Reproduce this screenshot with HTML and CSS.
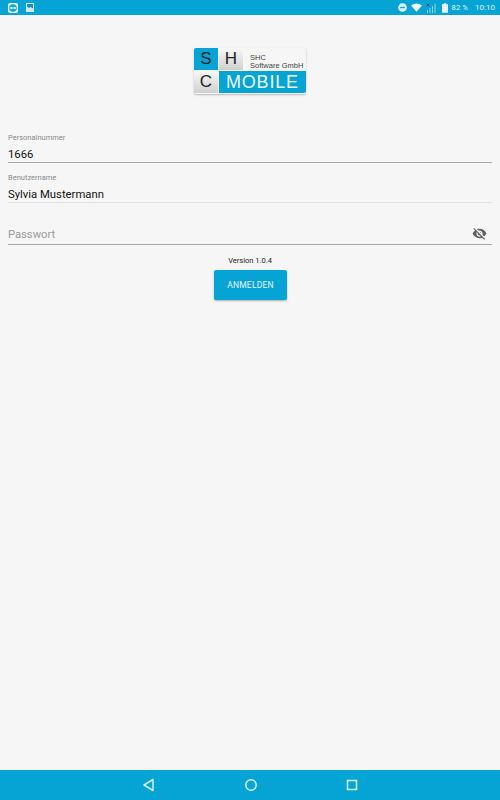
FILE: index.html
```html
<!DOCTYPE html>
<html lang="en">
<head>
  <meta charset="UTF-8" />
  <meta name="viewport" content="width=device-width, initial-scale=1.0" />
  <title>SHC Mobile</title>
  <link rel="stylesheet" href="styles.css">
</head>
<body>
  <header class="status-bar">
    <div class="status-left">
      <span class="tv-icon">
        <svg width="10" height="10" viewBox="0 0 11 11"><circle cx="5.500" cy="5.500" r="4.200" fill="#06a3d5"/><path d="M1.800 5.500 4 3.900v1h3v-1l2.200 1.600L7 7.100v-1H4v1z" fill="#fff"/></svg>
      </span>
      <svg width="8" height="9" viewBox="0 0 8 9"><path d="M0 0h8v9H0z" fill="#cfeaf5"/><path d="M1 1h6v4.500L4.500 4 3 5 1 3.500z" fill="#1690bd"/></svg>
    </div>
    <div class="status-right">
      <svg class="dnd" width="9" height="9" viewBox="0 0 10 10"><circle cx="5" cy="5" r="4.800" fill="#e4f4fa"/><path d="M2.500 4.200h5v1.600h-5z" fill="#06a3d5"/></svg>
      <svg class="wifi" width="11" height="9" viewBox="0 0 13 10"><path d="M0 2.500Q6.500-2 13 2.500L6.500 10z" fill="#f0f9fc"/></svg>
      <svg class="signal" width="11" height="10" viewBox="0 0 11 10"><path d="M1 7h1v3H1zM3.500 5h1v5h-1zM6 3h1v7H6zM8.500 0.500h1V10h-1z" fill="#8fd3ea"/><path d="M0.500 0.500l3 3m0-3l-3 3" stroke="#34536a" stroke-width="1"/></svg>
      <svg class="battery" width="6" height="10" viewBox="0 0 7 11"><path d="M2 0h3v1h2v10H0V1h2z" fill="#e8f6fb"/></svg>
      <span class="battery-text">82 %</span>
      <span class="clock">10:10</span>
    </div>
  </header>

  <main class="login">
    <div class="logo">
      <div class="logo-row">
        <span class="tile tile-blue">S</span>
        <span class="tile tile-grey">H</span>
        <span class="logo-company">SHC<br>Software GmbH</span>
      </div>
      <div class="logo-row">
        <span class="tile tile-grey">C</span>
        <span class="logo-mobile">MOBILE</span>
      </div>
    </div>

    <div class="field field-first">
      <label class="field-label">Personalnummer</label>
      <div class="field-value">1666</div>
    </div>
    <div class="field field-name">
      <label class="field-label">Benutzername</label>
      <div class="field-value">Sylvia Mustermann</div>
    </div>
    <div class="field field-pass">
      <div class="field-placeholder">Passwort</div>
      <svg class="eye" width="15" height="15" viewBox="0 0 24 24"><path d="M12 7c2.760 0 5 2.240 5 5 0 .65-.13 1.260-.36 1.830l2.920 2.920c1.510-1.260 2.700-2.890 3.430-4.750-1.730-4.390-6-7.500-11-7.500-1.400 0-2.740.25-3.980.7l2.160 2.160C10.740 7.130 11.350 7 12 7zM2 4.270l2.280 2.280.46.46C3.080 8.300 1.780 10.020 1 12c1.730 4.390 6 7.500 11 7.500 1.550 0 3.030-.3 4.380-.84l.42.42L19.730 22 21 20.730 3.270 3 2 4.270zM7.530 9.800l1.550 1.550c-.05.21-.08.43-.08.650 0 1.660 1.340 3 3 3 .22 0 .44-.03.65-.08l1.550 1.550c-.67.33-1.410.53-2.200.53-2.760 0-5-2.240-5-5 0-.79.2-1.530.53-2.200zm4.310-.78l3.150 3.150.02-.16c0-1.660-1.340-3-3-3l-.17.010z" fill="#5f5f5f"/></svg>
    </div>

    <p class="version">Version 1.0.4</p>
    <button class="login-button">ANMELDEN</button>
  </main>

  <footer class="nav-bar">
    <svg width="14" height="14" viewBox="0 0 14 14"><path d="M11 1.500v11L2 7z" fill="none" stroke="#d5f0f9" stroke-width="1.500" stroke-linejoin="round"/></svg>
    <svg width="14" height="14" viewBox="0 0 14 14"><circle cx="7" cy="7" r="5.200" fill="none" stroke="#d5f0f9" stroke-width="1.500"/></svg>
    <svg width="14" height="14" viewBox="0 0 14 14"><rect x="2.500" y="2.500" width="9" height="9" fill="none" stroke="#d5f0f9" stroke-width="1.500"/></svg>
  </footer>
</body>
</html>
```

FILE: styles.css
```css
* {
  margin: 0;
  padding: 0;
  box-sizing: border-box;
}
html, body {
  height: 100%;
}
body {
  display: flex;
  flex-direction: column;
  height: 800px;
  background: #f6f6f6;
  color: #111;
  font-family: Roboto, "Liberation Sans", sans-serif;
  overflow: hidden;
}
/* Status bar */
.status-bar {
  display: flex;
  justify-content: space-between;
  align-items: center;
  height: 15px;
  background: #06a3d5;
  padding: 0 5px 0 8px;
  color: #e0f3fa;
}
.status-left {
  display: flex;
  align-items: center;
  gap: 8px;
}
.tv-icon {
  display: flex;
  align-items: center;
  justify-content: center;
  width: 10px;
  height: 10px;
  background: #eaf6fb;
  border-radius: 2px;
}
.status-right {
  display: flex;
  align-items: center;
  font-size: 7.500px;
}
.dnd {
  margin-right: 4px;
}
.wifi {
  margin-right: 4px;
}
.signal {
  margin-right: 5px;
}
.battery {
  margin-right: 3px;
}
.battery-text {
  margin-right: 7px;
  letter-spacing: .2px;
}
.clock {
  font-size: 8px;
}
/* Login form */
.login {
  flex: 1;
  display: flex;
  flex-direction: column;
  align-items: center;
  padding: 33px 8px 0;
}
.logo {
  display: flex;
  flex-direction: column;
  width: 112px;
  height: 46px;
  gap: 1px;
  border-radius: 2px;
  box-shadow: 0 1px 2px rgba(0, 0, 0, .25);
}
.logo-row {
  display: flex;
  height: 22px;
  gap: 1px;
}
.tile {
  display: flex;
  align-items: center;
  justify-content: center;
  width: 24px;
  font-family: "Liberation Sans", sans-serif;
  font-size: 17px;
  color: #222;
}
.tile-blue {
  background: #06a3d5;
  border-radius: 2px 0 0 0;
}
.tile-grey {
  background: linear-gradient(#f8f8f8, #d0d0d0);
}
.logo-company {
  margin-left: 6px;
  padding-top: 6px;
  font-family: "Liberation Sans", sans-serif;
  font-size: 7.500px;
  line-height: 8px;
  color: #444;
}
.logo-mobile {
  flex: 1;
  display: flex;
  align-items: center;
  padding-left: 7px;
  background: #06a3d5;
  color: #eaf7fb;
  font-family: "Liberation Sans", sans-serif;
  font-size: 18px;
  letter-spacing: .8px;
  border-radius: 0 0 2px 0;
}
.field {
  position: relative;
  width: 100%;
  border-bottom: 1px solid #bdbdbd;
}
.field-first {
  margin-top: 19px;
  height: 50px;
  padding-top: 20px;
  border-bottom-color: #a9a9a9;
}
.field-name {
  height: 40px;
  padding-top: 10px;
  border-bottom-color: #e2e2e2;
}
.field-pass {
  height: 42px;
  padding-top: 24px;
  border-bottom-color: #a9a9a9;
}
.field-label {
  display: block;
  font-size: 7.500px;
  line-height: 9px;
  color: #8a8a8a;
}
.field-value {
  font-size: 11.300px;
  line-height: 15px;
  margin-top: 5px;
}
.field-placeholder {
  font-size: 11.200px;
  line-height: 15px;
  color: #9b9b9b;
}
.eye {
  position: absolute;
  right: 5px;
  top: 23px;
}
.version {
  margin-top: 11px;
  font-size: 7.500px;
  line-height: 9px;
  color: #222;
}
.login-button {
  margin: 5px 0 0 1px;
  width: 73px;
  height: 30px;
  background: #06a3d5;
  border: none;
  border-radius: 2px;
  color: #e8f8fd;
  font-family: Roboto, sans-serif;
  font-size: 8.500px;
  letter-spacing: .2px;
  box-shadow: 0 1px 2px rgba(0, 0, 0, .3);
}
/* Navigation bar */
.nav-bar {
  display: flex;
  justify-content: space-between;
  align-items: center;
  height: 30px;
  background: #06a3d5;
  padding: 0 141px 0 142px;
}
```
